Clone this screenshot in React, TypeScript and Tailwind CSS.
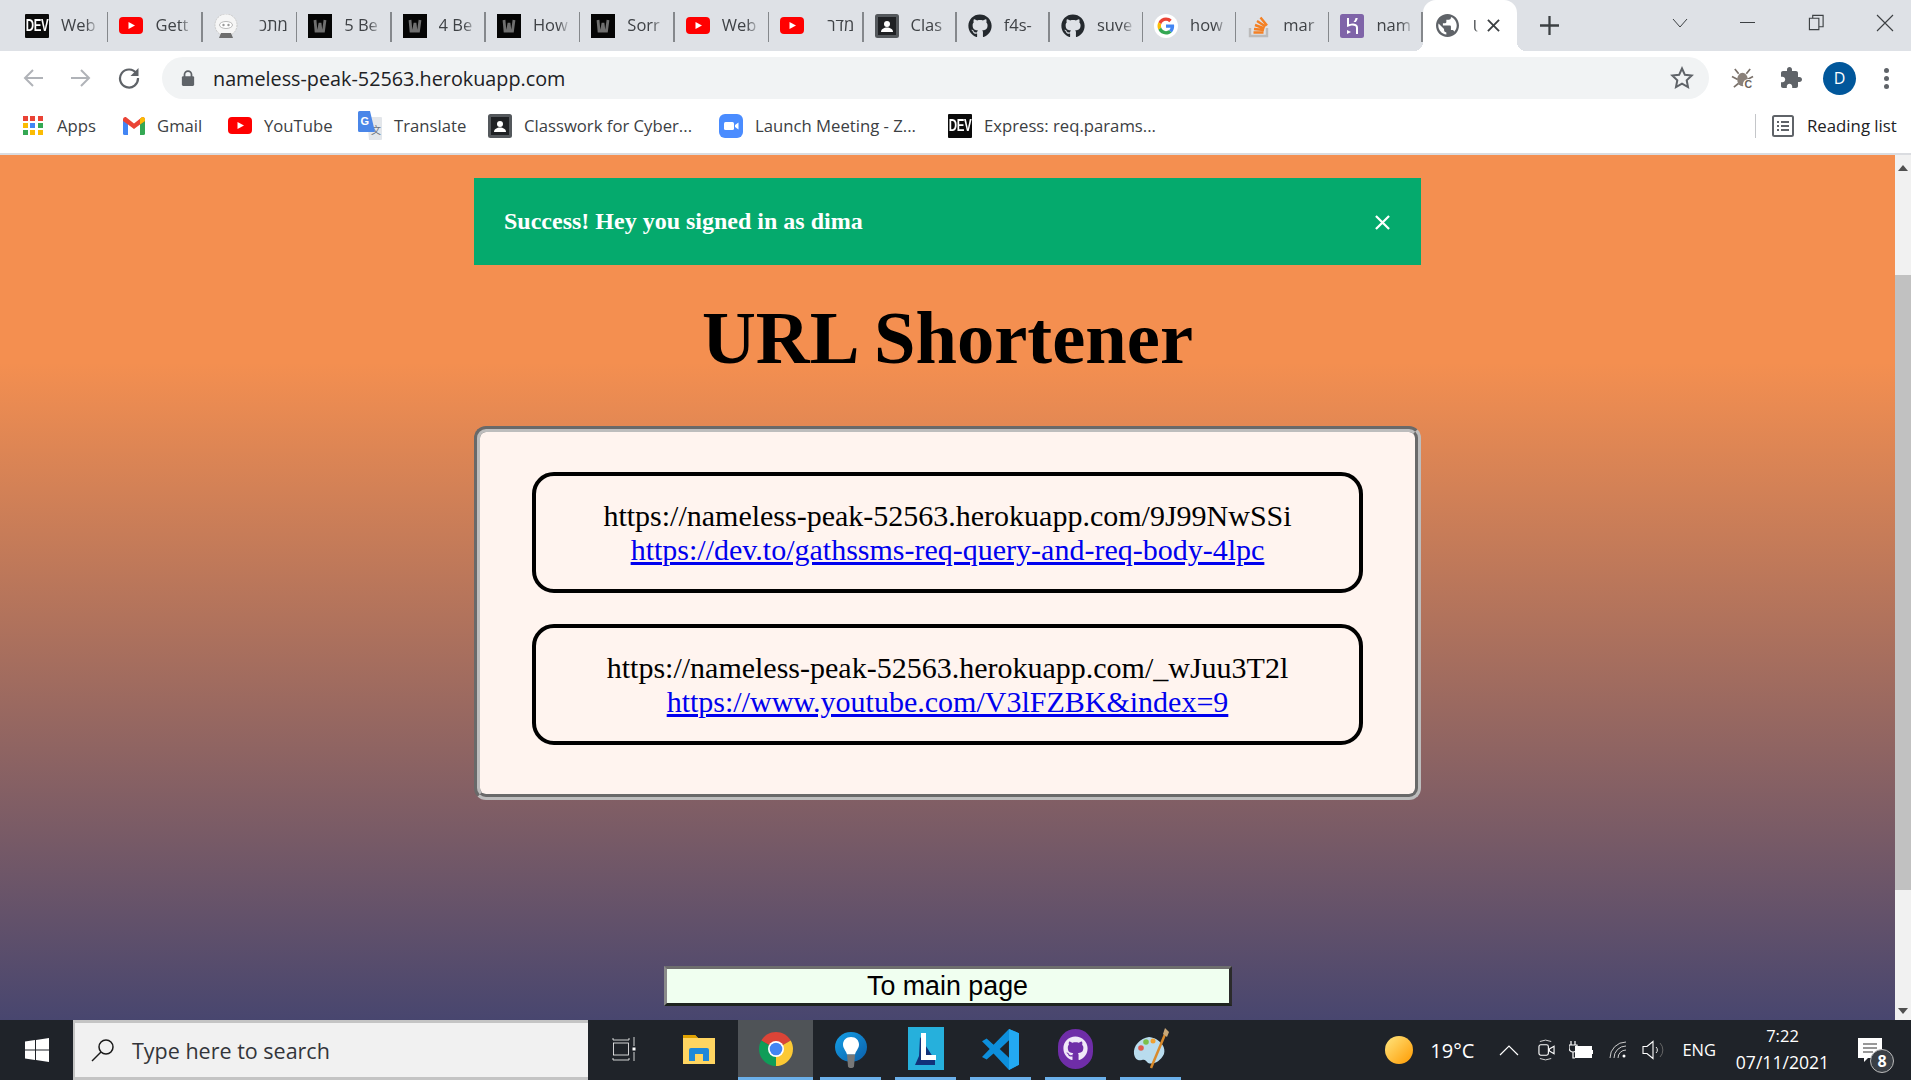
import React from "react";
import { FaGithub } from "react-icons/fa";

const Dev = ({ w = 24, h = 24 }: { w?: number; h?: number }) => (
  <div style={{ width: w, height: h }} className="shrink-0 bg-[#0a0a0a] rounded-[1px] flex items-center justify-center text-white font-bold text-[11.5px] tracking-[-0.4px] font-['Liberation_Sans',sans-serif]">
    <span className="scale-y-150">DEV</span>
  </div>
);
const YT = () => (
  <svg viewBox="0 0 24 17" className="w-6 h-[17px] shrink-0">
    <rect width="24" height="17" rx="4" fill="#f00" />
    <path d="M9.5 5l6.5 3.5-6.5 3.5z" fill="#fff" />
  </svg>
);
const WIcon = () => (
  <svg viewBox="0 0 24 24" className="w-6 h-6 shrink-0">
    <rect width="24" height="24" fill="#050505" />
    <path d="M7 6l1 11 2.500 0 1.500-8 1 8 2.500 0 1.500-11" fill="none" stroke="#6f6f6f" strokeWidth="2.800" />
  </svg>
);
const Sheep = () => (
  <svg viewBox="0 0 24 24" className="w-6 h-6 shrink-0">
    <circle cx="12" cy="11" r="11" fill="#f6f6f6" stroke="#c9c9c9" strokeWidth="1" strokeDasharray="2 1" />
    <ellipse cx="12" cy="11" rx="6.5" ry="3.5" fill="#fff" stroke="#a8a8a8" strokeWidth="0.8" />
    <circle cx="9.5" cy="11" r="1.2" fill="#999" />
    <circle cx="14.5" cy="11" r="1.2" fill="#999" />
    <path d="M5 24l2-5h10l2 5z" fill="#6e6e6e" />
  </svg>
);
const Classroom = () => (
  <svg viewBox="0 0 24 24" className="w-6 h-6 shrink-0">
    <rect width="24" height="24" rx="2.5" fill="#54585c" />
    <rect x="3" y="3" width="18" height="18" fill="#1f2124" />
    <circle cx="12" cy="10" r="3" fill="#fff" />
    <path d="M6 18c0-3 3-4.5 6-4.5s6 1.500 6 4.500z" fill="#fff" />
  </svg>
);
const Google = () => (
  <svg viewBox="0 0 24 24" className="w-6 h-6 shrink-0">
    <circle cx="12" cy="12" r="12" fill="#fff" />
    <g transform="translate(3.500 3.500) scale(0.354)">
      <path fill="#EA4335" d="M24 9.500c3.540 0 6.710 1.220 9.210 3.600l6.850-6.850C35.900 2.380 30.470 0 24 0 14.620 0 6.510 5.380 2.560 13.220l7.980 6.190C12.430 13.720 17.740 9.500 24 9.500z" />
      <path fill="#4285F4" d="M46.980 24.550c0-1.570-.15-3.090-.38-4.550H24v9.020h12.940c-.58 2.960-2.260 5.480-4.780 7.180l7.730 6c4.510-4.180 7.090-10.360 7.090-17.650z" />
      <path fill="#FBBC05" d="M10.530 28.590c-.48-1.450-.76-2.990-.76-4.590s.27-3.140.76-4.590l-7.980-6.190C.92 16.460 0 20.120 0 24c0 3.880.92 7.540 2.560 10.780l7.970-6.190z" />
      <path fill="#34A853" d="M24 48c6.480 0 11.930-2.130 15.890-5.810l-7.730-6c-2.150 1.450-4.920 2.300-8.160 2.300-6.260 0-11.570-4.220-13.470-9.910l-7.980 6.190C6.510 42.620 14.620 48 24 48z" />
    </g>
  </svg>
);
const SO = () => (
  <svg viewBox="0 0 24 24" className="w-6 h-6 shrink-0">
    <path d="M3 14v8h17v-8" fill="none" stroke="#bcbbbb" strokeWidth="2.400" />
    <g stroke="#f48024" strokeWidth="2.400">
      <path d="M6.500 18.500h10M7 15l10 1M8 11l9.500 3.500M10 7l8.500 5.500M13.500 3.500l6.500 8" />
    </g>
  </svg>
);
const Heroku = () => (
  <svg viewBox="0 0 24 24" className="w-6 h-6 shrink-0">
    <rect width="24" height="24" rx="2.500" fill="#7f64a8" />
    <path d="M7 4v9c3-1.500 6-2 8-1 1 .5 1 1.500 1 3v5h2v-6c0-2-.5-3-2-3.800-2-1-4.500-.7-7 0V4zM15.500 4c-.2 1.500-.8 2.800-2 4h2.300c1.100-1.200 1.700-2.500 1.900-4zM7 16v4l4-2z" fill="#fff" />
  </svg>
);
const Globe = () => (
  <svg viewBox="2 2 20 20" className="w-[23px] h-[23px] shrink-0">
    <circle cx="12" cy="12" r="9" fill="#fff" />
    <path fill="#5f6368" d="M12 2C6.48 2 2 6.48 2 12s4.48 10 10 10 10-4.48 10-10S17.52 2 12 2zm-1 17.93c-3.95-.49-7-3.85-7-7.93 0-.62.08-1.21.21-1.79L9 15v1c0 1.1.9 2 2 2v1.93zm6.900-2.540c-.26-.81-1-1.390-1.900-1.390h-1v-3c0-.55-.45-1-1-1H8v-2h2c.55 0 1-.45 1-1V7h2c1.100 0 2-.9 2-2v-.41c2.930 1.190 5 4.060 5 7.410 0 2.080-.8 3.970-2.100 5.390z" />
  </svg>
);
const Chrome = () => (
  <svg viewBox="0 0 34 34" className="w-[34px] h-[34px]">
    <path d="M17 17L2.300 8.500A17 17 0 0 1 31.700 8.500z" fill="#db4437" />
    <path d="M17 17L31.700 8.500A17 17 0 0 1 17 34z" fill="#fcc934" />
    <path d="M17 17L17 34A17 17 0 0 1 2.300 8.500z" fill="#0f9d58" />
    <circle cx="17" cy="17" r="8" fill="#fff" />
    <circle cx="17" cy="17" r="6.300" fill="#4285f4" />
  </svg>
);
const Bulb = () => (
  <svg viewBox="0 0 32 37" className="w-8 h-[37px] mt-[3px]">
    <defs>
      <linearGradient id="bl" x1="0" y1="0" x2="1" y2="1"><stop offset="0" stopColor="#14a0e8" /><stop offset="1" stopColor="#0b5ea8" /></linearGradient>
    </defs>
    <ellipse cx="16" cy="15" rx="16" ry="15" fill="url(#bl)" />
    <path d="M16 5c-5 0-8 3.500-8 7.500 0 4 3 6 4 10h8c1-4 4-6 4-10C24 8.500 21 5 16 5z" fill="#fff" />
    <path d="M12 22.500h8l-1 12c-1 2-5 2-6 0z" fill="#777" />
  </svg>
);
const LApp = () => (
  <svg viewBox="0 0 36 43" className="w-9 h-[43px]">
    <rect width="36" height="43" fill="#26b0dc" />
    <path d="M12 10l-1 19-4 9h20v-5z" fill="#11327a" />
    <path d="M13 6h5v22h10v5H13z" fill="#fff" />
  </svg>
);
const VS = () => (
  <svg viewBox="0 0 24 24" className="w-[37px] h-[42px]" preserveAspectRatio="none">
    <path d="M17.500 0.500L24 3v18l-6.500 3-10-9.500-4.500 3.500L0 16.500 5 12 0 7.500 3 6l4.500 3.500zM17.500 7l-6 5 6 5z" fill="#0d8fdc" />
    <path d="M17.500 0.500L24 3v18l-6.500 3z" fill="#23a9f2" />
  </svg>
);
const GHD = () => (
  <div className="w-[35px] h-10 rounded-full bg-[#6f2da8] flex items-center justify-center">
    <FaGithub className="text-[#f0e8f8] w-[25px] h-[25px]" />
  </div>
);
const Palette = () => (
  <svg viewBox="0 0 36 42" className="w-9 h-[42px]">
    <path d="M16 9C7 10 0 18 1 26c1 6 5 7 8 6 3-1 4 1 6 3 5 2 12-1 16-9 2-7-3-12-8-15-2-1-5-2-7-2z" fill="#b9dcee" />
    <circle cx="8" cy="20" r="2.800" fill="#e05a4e" />
    <circle cx="13" cy="14" r="2.800" fill="#7cc04b" />
    <circle cx="20" cy="13" r="2.500" fill="#f0a030" />
    <path d="M33 4L18 40" stroke="#d98a2b" strokeWidth="2.500" />
    <path d="M30 6l2-6 4 4-2 5z" fill="#c9a877" />
  </svg>
);
const Translate = () => (
  <svg viewBox="0 0 24 30" className="w-6 h-[30px] shrink-0">
    <path d="M9 6h14a1 1 0 0 1 1 1v21a1 1 0 0 1-1 1H11z" fill="#e3e6ea" />
    <text x="13" y="23" fontSize="10" fill="#6b7280" fontFamily="'Noto Sans CJK SC',sans-serif">文</text>
    <path d="M1.500 0H12l5 21H1.500A1.500 1.500 0 0 1 0 19.500V1.500A1.500 1.500 0 0 1 1.500 0z" fill="#4a86e8" />
    <text x="2.500" y="14" fontSize="11" fontWeight="700" fill="#fff" fontFamily="'Liberation Sans',sans-serif">G</text>
  </svg>
);
const Gmail = () => (
  <svg viewBox="0 0 22 18" className="w-[22px] h-[18px] shrink-0">
    <path d="M0 3v13.500A1.500 1.500 0 0 0 1.500 18H5V7z" fill="#4285f4" />
    <path d="M22 3v13.500a1.500 1.500 0 0 1-1.500 1.500H17V7z" fill="#34a853" />
    <path d="M5 7.500L0 4V2.500C0 .5 2 -.5 3.500.5L11 6.500 18.500.5C20-.5 22 .5 22 2.500V4l-5 3.500L11 12z" fill="#ea4335" />
    <path d="M17 1.800V7.500l5-3.500V2.500C22 .5 20-.5 18.500.5z" fill="#fbbc04" />
  </svg>
);
const Zoom = () => (
  <svg viewBox="0 0 24 24" className="w-6 h-6 shrink-0">
    <rect width="24" height="24" rx="6" fill="#4a8cff" />
    <rect x="5" y="8" width="10" height="8" rx="1.500" fill="#fff" />
    <path d="M16 11l3.500-2.500v7L16 13z" fill="#fff" />
  </svg>
);
const AppsGrid = () => (
  <div className="grid grid-cols-3 gap-[2px] w-5 shrink-0">
    {["#ea4335","#ea4335","#ea4335","#fbbc04","#4285f4","#34a853","#34a853","#fbbc04","#fbbc04"].map((c, i) => (
      <i key={i} style={{ backgroundColor: c }} className="block w-[5px] h-[5px]" />
    ))}
  </div>
);

const tabs: { icon: React.ReactNode; t: string; rtl?: boolean }[] = [
  { icon: <Dev />, t: "Web" },
  { icon: <YT />, t: "Gett" },
  { icon: <Sheep />, t: "מתכ", rtl: true },
  { icon: <WIcon />, t: "5 Be" },
  { icon: <WIcon />, t: "4 Be" },
  { icon: <WIcon />, t: "How" },
  { icon: <WIcon />, t: "Sorr" },
  { icon: <YT />, t: "Web" },
  { icon: <YT />, t: "מדר", rtl: true },
  { icon: <Classroom />, t: "Clas" },
  { icon: <FaGithub className="w-6 h-6 shrink-0 text-[#24292e]" />, t: "f4s-" },
  { icon: <FaGithub className="w-6 h-6 shrink-0 text-[#24292e]" />, t: "suve" },
  { icon: <Google />, t: "how" },
  { icon: <SO />, t: "mar" },
  { icon: <Heroku />, t: "nam" },
];

const Tab = ({ icon, t, rtl, wide }: { icon: React.ReactNode; t: string; rtl?: boolean; wide: boolean }) => (
  <div className={"h-full flex items-center pl-[11px] shrink-0 relative " + (wide ? "w-[94.4px]" : "w-[93.2px]")}>
    {icon}
    {rtl ? (
      <span dir="rtl" className="ml-3 w-[38px] whitespace-nowrap text-[16.5px] text-[#3f4246] [mask-image:linear-gradient(to_left,black_65%,transparent)]">{t}</span>
    ) : (
      <span className="ml-3 w-[38px] whitespace-nowrap text-[16.5px] text-[#3f4246] [mask-image:linear-gradient(to_right,black_65%,transparent)]">{t}</span>
    )}
    <span className="absolute right-0 top-[12px] h-[30px] w-[1.5px] bg-[#85888c]" />
  </div>
);

const Bm = ({ icon, t, cls }: { icon: React.ReactNode; t: string; cls: string }) => (
  <div className={"flex items-center shrink-0 " + cls}>
    {icon}
    <span className="whitespace-nowrap text-[16.7px] text-[#3c4043] ml-3">{t}</span>
  </div>
);

const Entry = ({ short, long }: { short: string; long: string }) => (
  <div className="h-[121px] shrink-0 border-[4px] border-black rounded-[22px] flex flex-col items-center justify-center text-[30px] leading-[34px] text-black">
    <div>{short}</div>
    <a href="#" className="text-[#0000ee] underline">{long}</a>
  </div>
);

const Slot = ({ children, active }: { children: React.ReactNode; active?: boolean }) => (
  <div className={"w-[75px] h-full flex items-center justify-center relative shrink-0 " + (active ? "bg-[#4f5357]" : "")}>
    <div className="-mt-[3px] flex items-center justify-center">{children}</div>
    <span className={"absolute bottom-0 h-[3px] bg-[#6bb0ea] " + (active ? "inset-x-0" : "inset-x-[7px]")} />
  </div>
);

export default function App() {
  return (
    <div className="w-full h-screen overflow-hidden flex flex-col bg-white font-['Open_Sans','Liberation_Sans',sans-serif]">
      {/* tab strip */}
      <div className="h-[51px] shrink-0 bg-[#dee1e6] flex items-center pl-[14px]">
        {tabs.map((x, i) => <Tab key={i} {...x} wide={i < 9} />)}
        <div className="w-[94px] h-full bg-white rounded-t-[13px] flex items-center pl-[13px] shrink-0 relative">
          <span className="absolute -left-[9px] bottom-0 w-[9px] h-[9px] bg-[radial-gradient(circle_at_0_0,transparent_9px,white_9px)]" />
          <span className="absolute -right-[9px] bottom-0 w-[9px] h-[9px] bg-[radial-gradient(circle_at_100%_0,transparent_9px,white_9px)]" />
          <Globe />
          <span className="ml-[14px] w-[5px] text-[16px] text-[#3c4043] [mask-image:linear-gradient(to_right,black_40%,transparent)]">U</span>
          <svg viewBox="0 0 14 14" className="w-[13px] h-[13px] ml-[9px]"><path d="M1 1l12 12M13 1L1 13" stroke="#3c4043" strokeWidth="2" /></svg>
        </div>
        <svg viewBox="0 0 20 20" className="w-[19px] h-[19px] ml-[23px] shrink-0"><path d="M10 0v20M0 10h20" stroke="#3c4043" strokeWidth="2.400" /></svg>
        <svg viewBox="0 0 16 10" className="w-4 h-[10px] ml-[113px] -mt-[6px] shrink-0"><path d="M1 1l7 8 7-8" fill="none" stroke="#3c4043" strokeWidth="1" /></svg>
        <span className="w-[15px] h-[1.5px] bg-[#3c4043] ml-[52px] -mt-[6px] shrink-0" />
        <svg viewBox="0 0 18 18" className="w-[17px] h-[17px] ml-[53px] -mt-[6px] shrink-0"><path d="M1.500 4.500h10v12h-10zM5 4.500V1.500h11v12h-4.500" fill="none" stroke="#3c4043" strokeWidth="1.200" /></svg>
        <svg viewBox="0 0 18 18" className="w-[18px] h-[18px] ml-[51px] -mt-[6px] shrink-0"><path d="M1 1l16 16M17 1L1 17" stroke="#3c4043" strokeWidth="1.100" /></svg>
      </div>

      {/* toolbar */}
      <div className="h-[52px] pt-[2px] shrink-0 flex items-center pl-[23px]">
        <svg viewBox="0 0 20 20" className="w-5 h-5 shrink-0"><path d="M20 10H2M10 2l-8 8 8 8" fill="none" stroke="#b0b3b8" strokeWidth="2" /></svg>
        <svg viewBox="0 0 20 20" className="w-5 h-5 ml-[28px] shrink-0"><path d="M0 10h18M10 2l8 8-8 8" fill="none" stroke="#b0b3b8" strokeWidth="2" /></svg>
        <svg viewBox="0 0 22 22" className="w-[22px] h-[22px] ml-[27px] shrink-0"><path d="M18.500 6.500A9 9 0 1 0 20 11" fill="none" stroke="#5f6368" strokeWidth="2.200" /><path d="M20.500 1v8h-8z" fill="#5f6368" /></svg>
        <div className="ml-[22px] w-[1547px] h-[42px] rounded-full bg-[#f1f3f4] flex items-center pl-[19px] shrink-0">
          <svg viewBox="0 0 16 20" className="w-[14px] h-[18px] shrink-0"><path d="M4 9V6a4 4 0 0 1 8 0v3" fill="none" stroke="#5f6368" strokeWidth="2" /><rect x="1" y="8" width="14" height="11" rx="1.500" fill="#5f6368" /></svg>
          <span className="ml-[18px] pt-[1px] text-[19.8px] text-[#202124] whitespace-nowrap">nameless-peak-52563.herokuapp.com</span>
          <svg viewBox="0 0 24 24" className="w-6 h-6 ml-auto mr-[15px] shrink-0"><path d="M12 2.500l2.900 6.300 6.800.8-5 4.700 1.300 6.800-6-3.400-6 3.400 1.300-6.800-5-4.700 6.800-.8z" fill="none" stroke="#5f6368" strokeWidth="2" /></svg>
        </div>
        <svg viewBox="0 0 24 24" className="w-[23px] h-[23px] ml-[22px] shrink-0"><path d="M4 2l4 5M20 2l-4 5M1 10l6 3M23 10l-6 3M3 21l5-4M20 19l-4-3" stroke="#7a716a" strokeWidth="1.800" /><ellipse cx="12" cy="13" rx="5.500" ry="7" fill="#8a817a" /><circle cx="18" cy="18" r="5.500" fill="#fff" /><text x="14" y="21.500" fontSize="11" fontWeight="700" fill="#6b625c" fontFamily="'Liberation Sans',sans-serif">C</text></svg>
        <svg viewBox="0 0 24 24" className="w-[24px] h-[24px] ml-[25px] shrink-0"><path fill="#5f6368" d="M20.500 11H19V7c0-1.100-.9-2-2-2h-4V3.500C13 2.120 11.880 1 10.500 1S8 2.120 8 3.500V5H4c-1.100 0-1.990.9-1.990 2v3.800H3.500c1.490 0 2.700 1.210 2.700 2.700s-1.210 2.700-2.700 2.700H2V20c0 1.100.9 2 2 2h3.800v-1.500c0-1.490 1.210-2.700 2.700-2.700 1.490 0 2.700 1.210 2.700 2.700V22H17c1.100 0 2-.9 2-2v-4h1.500c1.380 0 2.500-1.120 2.500-2.500S21.880 11 20.500 11z" /></svg>
        <div className="w-[33px] h-[33px] rounded-full bg-[#01579b] text-white text-[16px] flex items-center justify-center ml-[20px] shrink-0">D</div>
        <div className="flex flex-col gap-[3px] ml-[28px] shrink-0">
          <i className="w-[5px] h-[5px] rounded-full bg-[#5f6368]" />
          <i className="w-[5px] h-[5px] rounded-full bg-[#5f6368]" />
          <i className="w-[5px] h-[5px] rounded-full bg-[#5f6368]" />
        </div>
      </div>

      {/* bookmarks */}
      <div className="h-[46px] shrink-0 flex items-center pl-[23px] pb-[4px] border-b-[2px] border-[#dadce0] box-content">
        <Bm icon={<AppsGrid />} t="Apps" cls="w-[100px] [&>span]:ml-[14px]" />
        <Bm icon={<Gmail />} t="Gmail" cls="w-[105px]" />
        <Bm icon={<YT />} t="YouTube" cls="w-[130px]" />
        <Bm icon={<Translate />} t="Translate" cls="w-[130px]" />
        <Bm icon={<Classroom />} t="Classwork for Cyber..." cls="w-[231px]" />
        <Bm icon={<Zoom />} t="Launch Meeting - Z..." cls="w-[229px]" />
        <Bm icon={<Dev />} t="Express: req.params..." cls="w-[807px]" />
        <div className="flex items-center h-[24px] border-l border-[#c4c6c9] pl-[16px] shrink-0">
          <svg viewBox="0 0 22 22" className="w-[22px] h-[22px] shrink-0"><rect x="1" y="1" width="20" height="20" rx="1.500" fill="none" stroke="#5f6368" strokeWidth="2" /><path d="M5 7h2M9 7h8M5 11h2M9 11h8M5 15h2M9 15h8" stroke="#5f6368" strokeWidth="2" /></svg>
          <span className="ml-[13px] text-[16.8px] text-[#202124] whitespace-nowrap">Reading list</span>
        </div>
      </div>

      {/* page and scrollbar */}
      <div className="h-[865px] shrink-0 flex">
        <main className="flex-1 bg-[linear-gradient(#f48f50_0%,#f48f50_24%,#48466f_100%)] flex flex-col items-center pt-[23px] font-['Liberation_Serif',serif]">
          <div className="w-[947px] h-[87px] bg-[#05aa6d] text-white flex items-center justify-between pl-[30px] pr-[31px] font-bold text-[24px] shrink-0">
            <span className="-mt-[2px]">Success! Hey you signed in as dima</span>
            <svg viewBox="0 0 16 16" className="w-[15px] h-[15px] mt-[2px]"><path d="M1 1l14 14M15 1L1 15" stroke="#fff" strokeWidth="2.400" /></svg>
          </div>
          <h1 className="font-bold text-[74.6px] leading-[84px] mt-[31px] text-black">URL Shortener</h1>
          <div className="w-[947px] mt-[46px] h-[374px] bg-[#fff4ef] border-[6px] [border-style:groove] border-[#bdbdbd] rounded-[12px] px-[52px] pt-[40px] flex flex-col gap-[31px] shrink-0">
            <Entry short="https://nameless-peak-52563.herokuapp.com/9J99NwSSi" long="https://dev.to/gathssms-req-query-and-req-body-4lpc" />
            <Entry short="https://nameless-peak-52563.herokuapp.com/_wJuu3T2l" long="https://www.youtube.com/V3lFZBK&index=9" />
          </div>
          <button className="mt-[166px] w-[568px] h-[40px] bg-[#f0fff0] text-black text-[26.8px] leading-none border-[3px] border-t-[#6e6e6e] border-l-[#8a8a8a] border-r-[#2b2b2b] border-b-[#1f241f] font-['Liberation_Sans',sans-serif] flex items-center justify-center shrink-0">To main page</button>
        </main>
        <div className="w-4 bg-[#f1f1f1] flex flex-col items-center shrink-0">
          <svg viewBox="0 0 10 6" className="w-[10px] h-[6px] mt-[10px] shrink-0"><path d="M0 6l5-6 5 6z" fill="#505050" /></svg>
          <div className="w-full h-[615px] bg-[#c1c1c1] mt-[104px] shrink-0" />
          <svg viewBox="0 0 10 6" className="w-[10px] h-[6px] mt-auto mb-[6px] shrink-0"><path d="M0 0l5 6 5-6z" fill="#505050" /></svg>
        </div>
      </div>

      {/* taskbar */}
      <div className="h-[60px] shrink-0 bg-[#1f2329] flex items-center text-white">
        <div className="w-[73px] h-full flex items-center justify-center shrink-0">
          <svg viewBox="0 0 24 24" className="w-6 h-6"><path d="M0 3.500l10-1.400v9.400H0zM11 2l13-2v11.500H11zM0 12.500h10v9.400L0 20.500zM11 12.500h13V24l-13-2z" fill="#fff" /></svg>
        </div>
        <div className="w-[515px] h-full bg-[#f1f1f1] border-y-[3px] border-l-[2px] border-[#c4c4c4] flex items-center pl-[16px] shrink-0">
          <svg viewBox="0 0 24 24" className="w-6 h-6 shrink-0"><circle cx="15" cy="9" r="7" fill="none" stroke="#1a1a1a" strokeWidth="1.500" /><path d="M10 14L1 23" stroke="#1a1a1a" strokeWidth="1.500" /></svg>
          <span className="ml-[17px] pt-[3px] text-[21.5px] text-[#33353a] whitespace-nowrap">Type here to search</span>
        </div>
        <div className="w-[71px] flex justify-center shrink-0">
          <svg viewBox="0 0 24 24" className="w-6 h-6 -mt-[3px]"><path d="M1 1v2h16V1M1 21v2h16v-2" fill="none" stroke="#fff" strokeWidth="0.800" /><rect x="1.500" y="6" width="15" height="12" fill="none" stroke="#fff" strokeWidth="0.800" /><path d="M22 0v9M22 15v9" stroke="#fff" strokeWidth="0.800" /><rect x="20.500" y="10.500" width="3" height="3" fill="#fff" /></svg>
        </div>
        <div className="w-[79px] flex justify-center shrink-0">
          <svg viewBox="0 0 32 32" className="w-8 h-8 -mt-[3px]"><path d="M0 2h12l3 3h17v26H0z" fill="#ffd561" /><path d="M0 2h12l3 3H0z" fill="#e0a100" /><path d="M6 28v-11q0-2 2-2h16q2 0 2 2v11h-6v-7h-8v7z" fill="#1e88d8" /></svg>
        </div>
        <Slot active><Chrome /></Slot>
        <Slot><Bulb /></Slot>
        <Slot><LApp /></Slot>
        <Slot><VS /></Slot>
        <Slot><GHD /></Slot>
        <Slot><Palette /></Slot>
        <div className="ml-auto flex items-center h-full pr-[17px] shrink-0">
          <div className="w-7 h-7 rounded-full bg-[linear-gradient(135deg,#ffe680,#ff9a00)] shrink-0" />
          <span className="ml-[17px] pt-[2px] text-[20px] whitespace-nowrap">19°C</span>
          <svg viewBox="0 0 20 12" className="w-5 h-3 ml-[25px] shrink-0"><path d="M1 11l9-9 9 9" fill="none" stroke="#fff" strokeWidth="1.200" /></svg>
          <svg viewBox="0 0 18 24" className="w-[17px] h-6 ml-[19px] shrink-0"><path d="M2 3q6-3 12 0M2 21q6 3 12 0" fill="none" stroke="#ddd" strokeWidth="1" /><rect x="1" y="6.500" width="10" height="11" rx="2" fill="none" stroke="#fff" strokeWidth="1.200" /><path d="M12 11l5-3v8l-5-3z" fill="none" stroke="#fff" strokeWidth="1.200" /></svg>
          <svg viewBox="0 0 24 18" className="w-6 h-[18px] ml-[14px] shrink-0"><path d="M2 0v4M6 0v4M0 4h8v3a4 4 0 0 1-8 0zM4 11v6h2" fill="none" stroke="#fff" strokeWidth="1.200" /><rect x="6" y="5" width="17" height="12" fill="#fff" /><rect x="23" y="9" width="1" height="4" fill="#fff" /></svg>
          <svg viewBox="0 0 18 18" className="w-[18px] h-[18px] ml-[16px] shrink-0"><path d="M1 17A16 16 0 0 1 17 1M5 17A12 12 0 0 1 17 5M9 17a8 8 0 0 1 8-8" fill="none" stroke="#ccc" strokeWidth="1" /><circle cx="15" cy="15" r="1.500" fill="#fff" /></svg>
          <svg viewBox="0 0 22 20" className="w-[22px] h-5 ml-[15px] shrink-0"><path d="M1 6.500h4l6-5v17l-6-5H1z" fill="none" stroke="#fff" strokeWidth="1.100" /><path d="M14 7a4 4 0 0 1 0 6" fill="none" stroke="#eee" strokeWidth="1" /><path d="M18 3a10 10 0 0 1 0 14" fill="none" stroke="#666" strokeWidth="1" /></svg>
          <span className="ml-[18px] pt-[1px] text-[16.500px] whitespace-nowrap">ENG</span>
          <div className="ml-[19px] w-[95px] -mt-[3px] flex flex-col items-center text-[17.6px] leading-[27px] shrink-0">
            <span className="text-[16.500px]">7:22</span>
            <span className="whitespace-nowrap">07/11/2021</span>
          </div>
          <div className="ml-[28px] w-[36px] h-[44px] relative shrink-0">
            <svg viewBox="0 0 24 24" className="w-6 h-6 absolute left-0 top-[10px]"><path d="M0 0h24v20H10l-4 4v-4H0z" fill="#fff" /><path d="M5 6h14M5 10h14M5 14h10" stroke="#333" strokeWidth="1.200" /></svg>
            <div className="absolute left-[12px] top-[21px] w-6 h-6 rounded-full bg-[#3a3f45] border border-[#bbb] text-white font-bold text-[16px] flex items-center justify-center">8</div>
          </div>
        </div>
      </div>
      <div className="h-[2px] bg-white shrink-0" />
    </div>
  );
}
